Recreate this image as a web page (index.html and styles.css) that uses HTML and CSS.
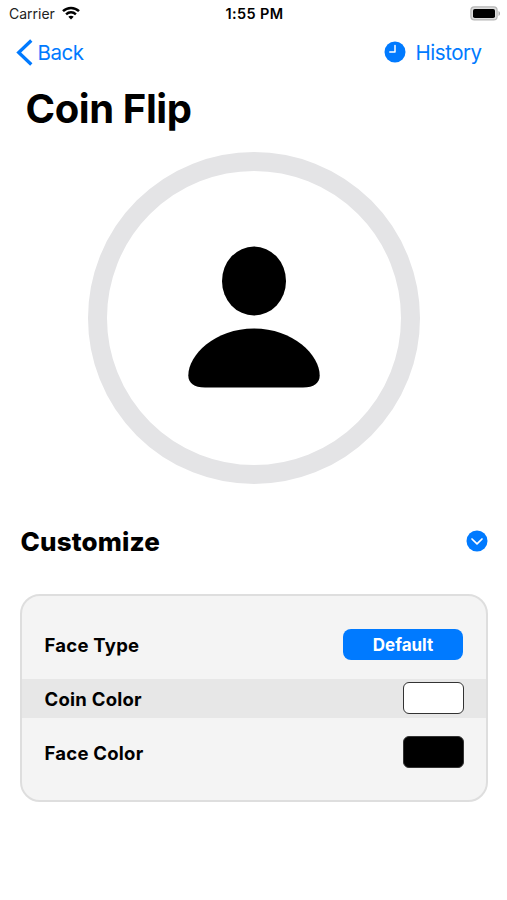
FILE: index.html
```html
<!DOCTYPE html>
<html lang="en">
<head>
<meta charset="utf-8">
<title>Coin Flip</title>
<link rel="stylesheet" href="styles.css">
</head>
<body>
<div class="status">
  <div class="carrier"><span class="carrier-name">Carrier</span>
    <svg class="wifi" width="18" height="14" viewBox="0 0 18 14" fill="none" stroke="#000" stroke-width="2.5">
      <path d="M1 5.1C5.5.8 12.500.8 17 5.100M4.100 8.300c2.800-2.600 7-2.600 9.800 0"/>
      <path d="M9 13.500 6.300 10.800c1.500-1.400 3.900-1.400 5.400 0Z" fill="#000" stroke="none"/>
    </svg>
  </div>
  <span class="time">1:55 PM</span>
  <svg class="battery" width="31" height="15" viewBox="0 0 31 15">
    <rect x=".9" y=".9" width="26.200" height="13" rx="3.500" fill="#ddd" stroke="#b5b5b5" stroke-width="1.200"/>
    <rect x="3" y="3" width="22" height="9" rx="1.800"/>
    <path d="M28.500 5c2 .7 2 4.300 0 5Z" fill="#aaa"/>
  </svg>
</div>
<nav class="nav">
  <a class="back"><svg width="17" height="27" viewBox="0 0 17 27" fill="none" stroke="#007aff" stroke-width="3.300"><path d="M15.300 1.500 2.700 13.500l12.600 12"/></svg><span class="back-text">Back</span></a>
  <a class="history"><svg width="22" height="22" viewBox="0 0 22 22"><circle cx="11" cy="11" r="10.500" fill="#007aff"/><path d="M11 4.500V11H5.800" fill="none" stroke="#fff" stroke-width="1.500" stroke-linecap="round" stroke-linejoin="round"/></svg><span class="history-text">History</span></a>
</nav>
<h1 class="title">Coin Flip</h1>
<div class="coin">
  <svg width="132" height="142" viewBox="0 0 132 142"><ellipse cx="66" cy="35" rx="32" ry="34.500"/><path d="M17 141.500C6 141.500.3 137 .3 129.500.3 109 27 82.500 66 82.500s65.700 26.500 65.700 47c0 7.500-5.700 12-16.700 12Z"/></svg>
</div>
<div class="section">
  <h2 class="heading">Customize</h2>
  <svg width="22" height="22" viewBox="0 0 22 22"><circle cx="11" cy="11" r="10.500" fill="#007aff"/><path d="m6 9 5 4.900L16 9" fill="none" stroke="#fff" stroke-width="1.700" stroke-linecap="round" stroke-linejoin="round"/></svg>
</div>
<div class="card">
  <div class="row"><span class="label">Face Type</span><span class="button"><span class="button-text">Default</span></span></div>
  <div class="row shaded"><span class="label">Coin Color</span><span class="swatch white"></span></div>
  <div class="row"><span class="label">Face Color</span><span class="swatch black"></span></div>
</div>
</body>
</html>
```
FILE: styles.css
```css
* { box-sizing: border-box; }
body {
  margin: 0;
  height: 900px;
  background: #fff;
  color: #000;
  font-family: Inter, "Liberation Sans", sans-serif;
}
svg { display: block; flex: none; }
.status {
  display: grid;
  grid-template-columns: 1fr auto 1fr;
  align-items: center;
  height: 27px;
  padding: 0 6px 0 9px;
}
.carrier { display: flex; align-items: center; gap: 7px; font-size: 14px; color: #222; }
.wifi { margin-top: -2px; }
.time { font-size: 14.500px; font-weight: 600; letter-spacing: 0.4px; margin-right: 1px; }
.battery { justify-self: end; }
.nav {
  display: flex;
  justify-content: space-between;
  height: 50px;
  padding: 0 25.500px 0 16px;
  align-items: center;
  color: #007aff;
  font-size: 20.5px;
  letter-spacing: -0.5px;
}
.back, .history { display: flex; align-items: center; }
.back { gap: 4.500px; }
.history { gap: 9.500px; }
.title { margin: 6px 0 0 25.500px; font-size: 40px; line-height: 52px; font-weight: 700; letter-spacing: -0.400px; }
.coin {
  width: 332px;
  height: 332px;
  margin: 17px 0 0 88px;
  border: 19px solid #e4e4e6;
  border-radius: 50%;
  display: flex;
  align-items: center;
  justify-content: center;
}
.coin svg { margin-top: -3px; }
.section {
  display: flex;
  justify-content: space-between;
  align-items: center;
  height: 40px;
  margin-top: 37px;
  padding: 0 19px 0 20.500px;
}
.heading { margin: 0; font-size: 26px; font-weight: 800; letter-spacing: 0.150px; }
.card {
  margin: 33px 19px 0 20px;
  height: 208px;
  border: 2px solid #dedede;
  border-radius: 20px;
  background: #f4f4f4;
  padding-top: 29px;
}
.row {
  display: flex;
  justify-content: space-between;
  align-items: center;
  height: 39px;
  padding: 0 22px 0 22.500px;
  margin-bottom: 15px;
}
.shaded { background: #e7e7e7; }
.label { font-size: 18.500px; font-weight: 700; letter-spacing: 0.250px; }
.button {
  display: flex;
  align-items: center;
  justify-content: center;
  width: 120px;
  height: 31px;
  margin-right: 1px;
  border-radius: 8px;
  background: #007aff;
  color: #fff;
  font-size: 17px;
  font-weight: 700;
}
.row .swatch { margin-top: -1px; }
.swatch { width: 61px; height: 32px; border: 1.500px solid #333; border-radius: 6px; }
.white { background: #fff; }
.black { background: #000; }
```
